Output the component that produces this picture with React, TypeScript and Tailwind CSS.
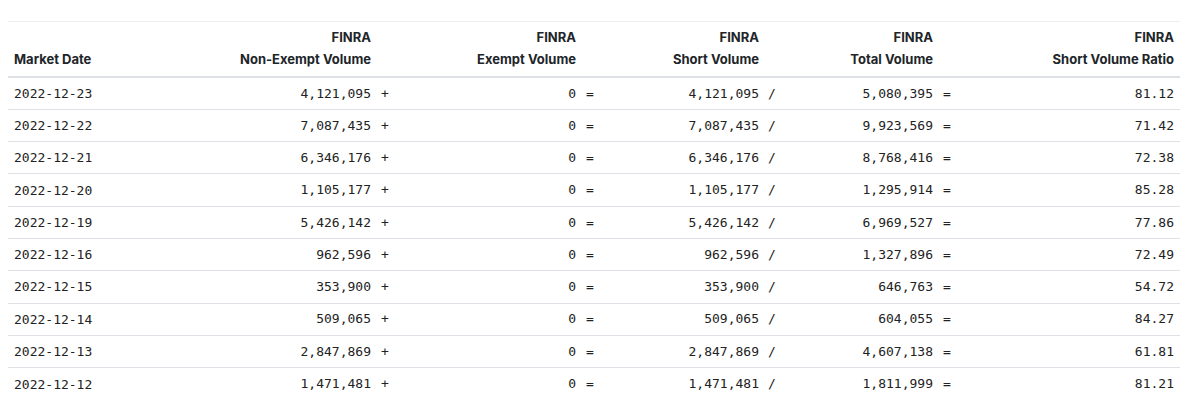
const rows = [
  ["2022-12-23", "4,121,095", "0", "4,121,095", "5,080,395", "81.12"],
  ["2022-12-22", "7,087,435", "0", "7,087,435", "9,923,569", "71.42"],
  ["2022-12-21", "6,346,176", "0", "6,346,176", "8,768,416", "72.38"],
  ["2022-12-20", "1,105,177", "0", "1,105,177", "1,295,914", "85.28"],
  ["2022-12-19", "5,426,142", "0", "5,426,142", "6,969,527", "77.86"],
  ["2022-12-16", "962,596", "0", "962,596", "1,327,896", "72.49"],
  ["2022-12-15", "353,900", "0", "353,900", "646,763", "54.72"],
  ["2022-12-14", "509,065", "0", "509,065", "604,055", "84.27"],
  ["2022-12-13", "2,847,869", "0", "2,847,869", "4,607,138", "61.81"],
  ["2022-12-12", "1,471,481", "0", "1,471,481", "1,811,999", "81.21"],
];

function Head({ top, label }: { top?: string; label: string }) {
  return (
    <th className="px-[6px] pt-[4px] pb-[6px] text-right align-bottom font-bold">
      {top && <div className="leading-[22px]">{top}</div>}
      <div className="leading-[22px]">{label}</div>
    </th>
  );
}

export default function App() {
  const mono = "font-['DejaVu_Sans_Mono',monospace] text-[13px] text-[#222]";
  return (
    <div className="bg-white px-2 pt-[21px] h-[417px] font-['Inter','Noto_Sans',sans-serif] text-[13px] text-[#212529]">
      <table className="table-fixed w-[1172px] border-collapse">
        <colgroup>
          <col className="w-[192px]" />
          <col className="w-[177px]" />
          <col className="w-[30px]" />
          <col className="w-[175px]" />
          <col className="w-[30px]" />
          <col className="w-[153px]" />
          <col className="w-[30px]" />
          <col className="w-[144px]" />
          <col className="w-[30px]" />
          <col className="w-[211px]" />
        </colgroup>
        <thead>
          <tr className="border-t border-[#eceef0] border-b-2 border-b-[#dee2e6]">
            <th className="px-[6px] pt-[4px] pb-[6px] text-left align-bottom font-bold">
              <div className="leading-[22px]">Market Date</div>
            </th>
            <Head top="FINRA" label="Non-Exempt Volume" />
            <th />
            <Head top="FINRA" label="Exempt Volume" />
            <th />
            <Head top="FINRA" label="Short Volume" />
            <th />
            <Head top="FINRA" label="Total Volume" />
            <th />
            <Head top="FINRA" label="Short Volume Ratio" />
          </tr>
        </thead>
        <tbody className={mono}>
          {rows.map((r, i) => (
            <tr key={r[0]} className={i < rows.length - 1 ? "border-b border-[#dee2e6]" : ""}>
              <td className="px-[6px] h-[32.3px] leading-[19px] text-left">{r[0]}</td>
              <td className="px-[6px] text-right">{r[1]}</td>
              <td className="pl-[4px]">+</td>
              <td className="px-[6px] text-right">{r[2]}</td>
              <td className="pl-[4px]">=</td>
              <td className="px-[6px] text-right">{r[3]}</td>
              <td className="pl-[3px]">/</td>
              <td className="px-[6px] text-right">{r[4]}</td>
              <td className="pl-[4px]">=</td>
              <td className="px-[6px] text-right">{r[5]}</td>
            </tr>
          ))}
        </tbody>
      </table>
    </div>
  );
}
